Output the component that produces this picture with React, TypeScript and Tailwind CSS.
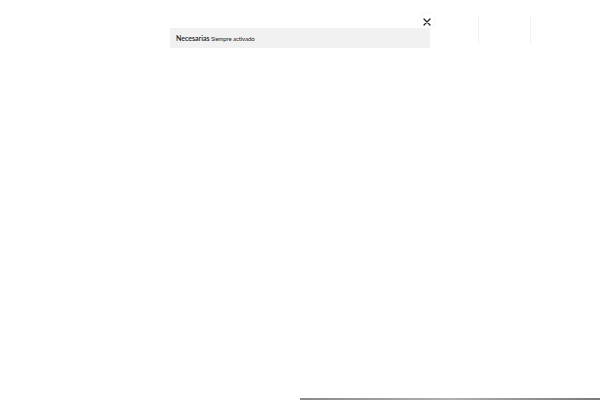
import React from "react";

export default function App() {
  return (
    <div className="relative w-[600px] h-[400px] bg-white overflow-hidden" style={{ fontFamily: "Lato, 'Open Sans', sans-serif" }}>
      <div className="pt-[12px] pl-[170px] w-[430px]">
        <div className="flex justify-end">
          <button className="w-[19px] h-[19px] mr-[-6px] rounded-full border border-[#f6f6f6] flex items-center justify-center">
            <svg width="8" height="8" viewBox="0 0 8 8">
              <path d="M1 1L7 7M7 1L1 7" stroke="#222" strokeWidth="1.3" strokeLinecap="round" />
            </svg>
          </button>
        </div>
        <div className="mt-[-3px] h-[20px] w-[260px] bg-[#f1f1f1] flex items-center pl-[6px] gap-[1.5px] leading-none pt-[1px]">
          <span className="text-[7px] font-semibold text-[#1a1a1a]">Necesarias</span>
          <span className="text-[6px] tracking-[-0.1px] text-[#222]">Siempre activado</span>
        </div>
      </div>
      <div className="absolute left-[478px] top-[15px] h-[29px] w-px bg-[#f3f3f3]" />
      <div className="absolute left-[530px] top-[15px] h-[29px] w-px bg-[#f3f3f3]" />
      <div className="absolute left-[300px] bottom-0 w-[300px] h-[2px] bg-gradient-to-r from-[#8a8a8a] via-[#b0b0b0] to-[#7a7a7a]" />
    </div>
  );
}
